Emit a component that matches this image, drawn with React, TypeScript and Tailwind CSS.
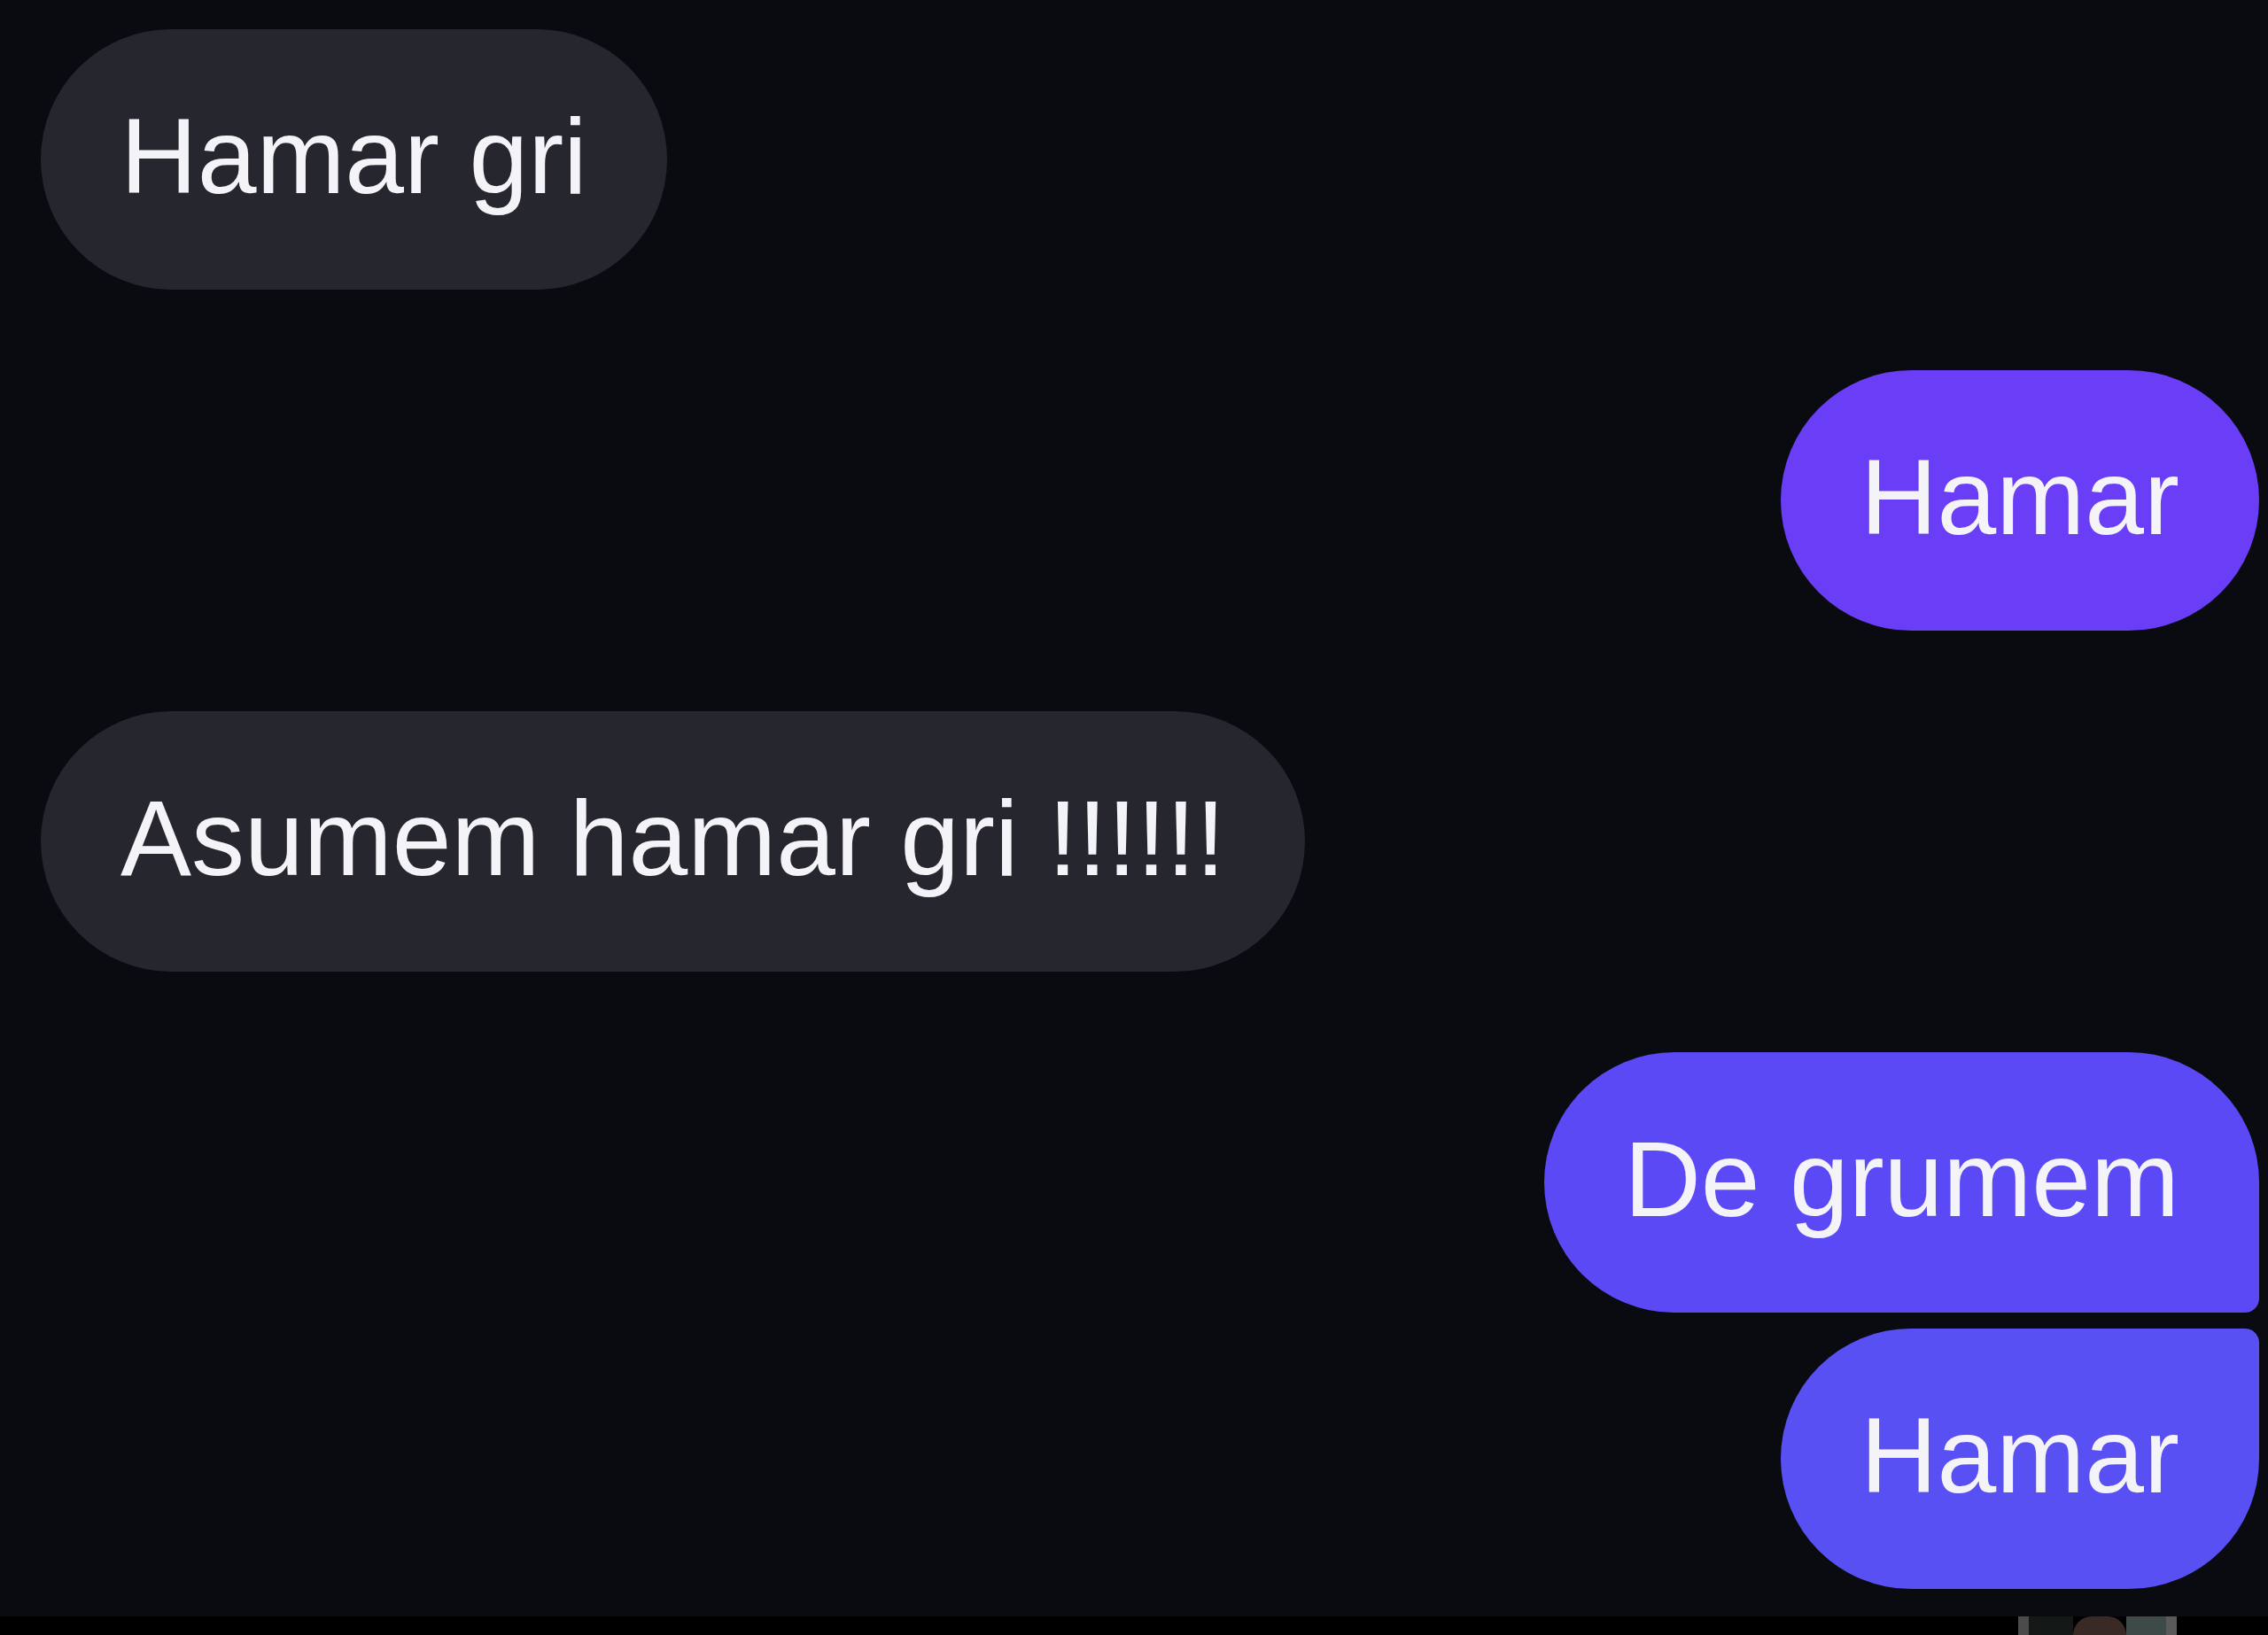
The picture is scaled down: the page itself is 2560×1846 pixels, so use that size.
const messages = [
  { text: 'Hamar gri', mine: false },
  { text: 'Hamar', mine: true, color: 'bg-[#6a3ef6]' },
  { text: 'Asumem hamar gri !!!!!!', mine: false },
]

function Bubble({ text, mine, color, shape }: { text: string; mine: boolean; color?: string; shape?: string }) {
  return (
    <div
      className={`h-[294px] flex items-center px-[90px] text-[120px] leading-none text-[#f4f3f8] whitespace-nowrap ${
        mine ? `self-end ${color}` : 'self-start bg-[#25262e]'
      } ${shape ?? 'rounded-[147px]'}`}
    >
      <span className="-mt-[8px]">{text}</span>
    </div>
  )
}

export default function App() {
  return (
    <div className="w-[2560px] h-[1846px] bg-[#0a0b10] flex flex-col overflow-hidden font-['Liberation_Sans',Arial,sans-serif]">
      <div className="flex flex-col gap-[91px] pl-[46px] pr-[10px] pt-[33px]">
        {messages.map((m, i) => (
          <Bubble key={i} {...m} />
        ))}
        <div className="flex flex-col gap-[18px]">
          <Bubble
            text="De grumem"
            mine
            color="bg-[#5b49f6]"
            shape="rounded-l-[147px] rounded-tr-[147px] rounded-br-[16px]"
          />
          <Bubble
            text="Hamar"
            mine
            color="bg-[#5850f3]"
            shape="rounded-l-[147px] rounded-br-[147px] rounded-tr-[16px]"
          />
        </div>
      </div>
      <div className="mt-auto h-[21px] bg-black flex justify-end pr-[103px]">
        <div className="w-[179px] h-full flex">
          <div className="w-[12px] bg-[#4b4b4b]" />
          <div className="w-[50px] bg-[#141816]" />
          <div className="w-[60px] bg-[#3a2a26] rounded-t-full" />
          <div className="flex-1 bg-[#3e4a47]" />
          <div className="w-[12px] bg-[#5a5a5a]" />
        </div>
      </div>
    </div>
  )
}
